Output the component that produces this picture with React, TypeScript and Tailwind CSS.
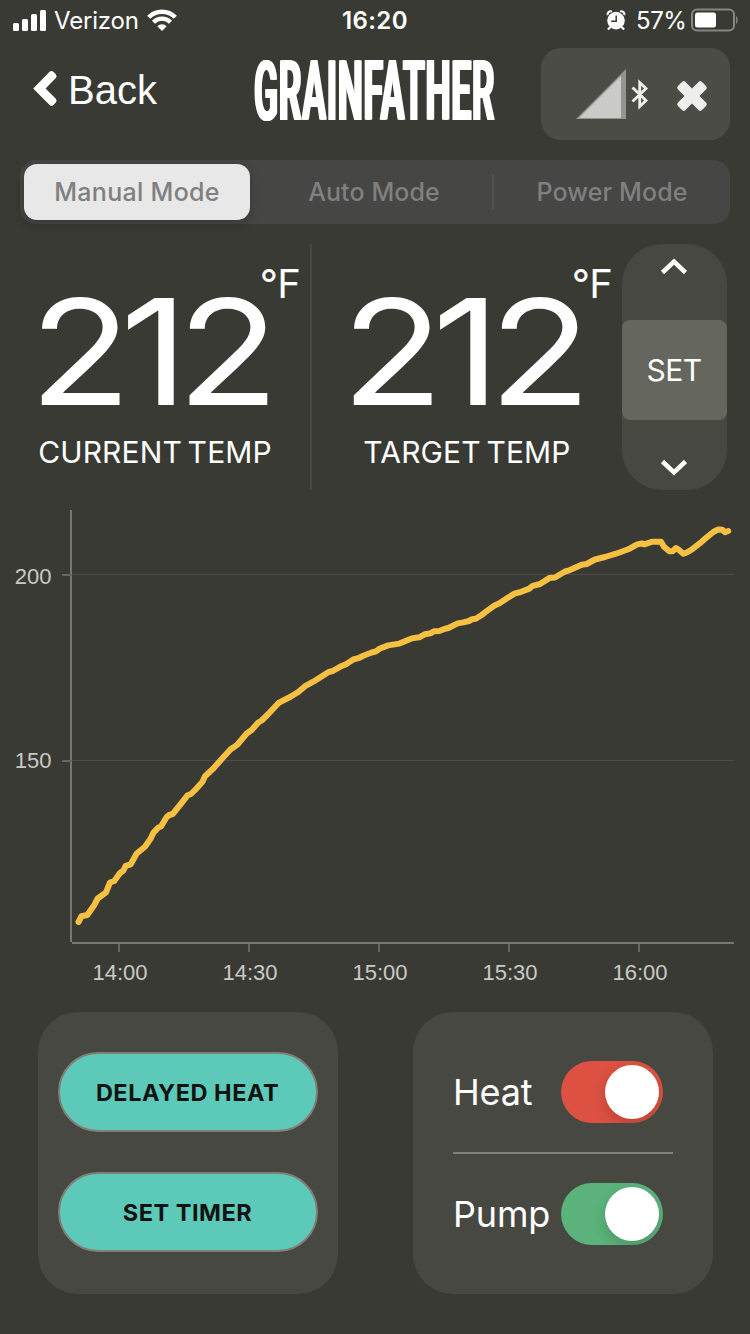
import React from "react";

const readings: number[][] = [
  [78.5, 922], [81.5, 916.2], [87.3, 915], [94.3, 905], [97.7, 898.5], [106, 892.3], [110, 882.5], [114.3, 881],
  [120, 873], [123.3, 870.7], [125.7, 865.9], [130.7, 864.3], [136.7, 853.5], [145, 846.7], [150.7, 838.5],
  [153.3, 832.9], [158.3, 827.5], [161, 826.5], [166.7, 817], [169.3, 815], [172.7, 814], [180, 805], [187.7, 795.2],
  [191, 794], [196.7, 788.3], [202.3, 782], [205, 776.2], [213.3, 768.5], [223.3, 757.3], [230.7, 749.2], [233.3, 747.7],
  [237.3, 744.7], [246.7, 733.5], [251.7, 730], [258.3, 722.5], [261.7, 720.5], [268.3, 714], [278.3, 703.2],
  [282, 701.2], [290, 697], [298.3, 692], [305, 686.2], [313.3, 681.7], [328.3, 672.2], [332.7, 671], [340, 666.8],
  [346, 664.2], [353.3, 659.5], [358.3, 658.2], [363.3, 655.7], [371.7, 652.5], [375.7, 651.5], [380, 648.5],
  [388.3, 645.4], [399.3, 643.6], [411.7, 638.4], [419.3, 637.3], [425, 634.2], [430.7, 633.3], [434, 631.2],
  [439.3, 631], [445, 628.7], [448.3, 628], [457.7, 623.4], [463.3, 622.4], [469, 621], [472.3, 619.2], [475.7, 618.7],
  [481.7, 615], [486, 611.7], [494, 605.8], [499, 603.6], [506.7, 598.4], [515, 593.4], [520, 592.3], [529.3, 588.6],
  [532.7, 585.8], [540, 584], [549.3, 578.1], [555, 577.5], [565, 571.5], [569.3, 570.3], [581.7, 564.7], [586.7, 564],
  [595, 559.5], [605, 557], [616, 553.7], [628.3, 549.3], [636.7, 544.7], [641.7, 543.4], [644.3, 544.3], [651.7, 541.8],
  [661, 541.8], [664, 546.7], [669.3, 551.2], [672.7, 551.2], [676, 548], [679.3, 550.3], [683.3, 553.8], [687.3, 552.3],
  [692.3, 549.2], [700, 543.2], [706.7, 537.3], [713.3, 532], [718.3, 529.4], [722.3, 529.8], [725, 532.2], [728.3, 531],
];

function StatusBar() {
  return (
    <div className="flex h-[40px] items-center pl-[13px] pr-[11px] text-white">
      <div className="flex w-[329px] items-center">
        <div className="mr-[8px] flex items-end gap-[3px]">
          <i className="h-[8px] w-[6px] rounded-[1.5px] bg-white" />
          <i className="h-[12px] w-[6px] rounded-[1.5px] bg-white" />
          <i className="h-[17px] w-[6px] rounded-[1.5px] bg-white" />
          <i className="h-[21px] w-[6px] rounded-[1.5px] bg-white" />
        </div>
        <span className="mt-[2px] w-[93px] text-[24px] leading-[30px] tracking-[-0.2px]">Verizon</span>
        <svg width="30" height="22" viewBox="0 0 30 22" fill="none" stroke="white" strokeWidth="4.400">
          <path d="M1.7 8.2 A19 19 0 0 1 28.3 8.2" />
          <path d="M6.5 13.2 A12 12 0 0 1 23.5 13.2" />
          <path d="M15 22 L10.3 17.2 A6.8 6.8 0 0 1 19.7 17.2 Z" fill="white" stroke="none" />
        </svg>
      </div>
      <span className="mt-[2px] flex-1 text-[24px] font-semibold leading-[30px] tracking-[0.4px]">16:20</span>
      <svg className="mr-[10px]" width="20" height="20" viewBox="0 0 20 20">
        <circle cx="10" cy="10.6" r="8.800" fill="white" />
        <path d="M1.6 4.2A3 3 0 0 1 5 1.300M15 1.300A3 3 0 0 1 18.4 4.200M4 17.500L2.500 18.800M16 17.500L17.500 18.800" stroke="white" strokeWidth="2.2" strokeLinecap="round" />
        <path d="M10.2 5.6V11.2H5.2" fill="none" stroke="#3a3a34" strokeWidth="1.500" />
      </svg>
      <span className="mt-[2px] w-[54px] whitespace-nowrap text-[24px] leading-[30px] tracking-[-0.4px]">57%</span>
      <svg width="49" height="24" viewBox="0 0 49 24">
        <rect x="2" y="1.5" width="42" height="21" rx="5" fill="none" stroke="#868682" strokeWidth="2" />
        <rect x="5" y="4.5" width="21" height="15" rx="2.5" fill="white" />
        <path d="M46 8C48.2 9.3 48.2 14.7 46 16Z" fill="#868682" />
      </svg>
    </div>
  );
}

function Header() {
  return (
    <header className="flex h-[120px] items-start pl-[31px] pr-[20px] text-white">
      <div className="flex w-[222px] items-center pt-[27px]">
        <svg className="-mt-[4px]" width="27" height="40" viewBox="0 0 27 40">
          <path d="M2.200 20.400L18.600 3.800Q20.500 2 22.400 3.800L24.800 6.300Q26.500 8.300 24.800 10.100L14.600 20.400L24.800 30.700Q26.500 32.600 24.800 34.500L22.400 37Q20.500 38.800 18.600 37Z" fill="white" />
        </svg>
        <span className="ml-[10px] font-['Liberation_Sans',sans-serif] text-[40px] leading-[46px]">Back</span>
      </div>
      <div className="mt-[12px] h-[80px] w-[288px]">
        <span className="inline-block origin-left scale-x-[0.42] whitespace-nowrap font-['Roboto',sans-serif] text-[84px] font-bold leading-[80px] tracking-[1.9px] [text-shadow:1.5px_0_0_white,3px_0_0_white,5px_0_0_white]">
          GRAINFATHER
        </span>
      </div>
      <div className="mt-[8px] flex h-[92px] w-[189px] items-center rounded-[20px] bg-[#4c4c47]">
        <svg width="189" height="92" viewBox="0 0 189 92">
          <path d="M35 71L85 21V71Z" fill="#94958f" />
          <path d="M38 70L80 28V70Z" fill="#cacac8" />
          <path d="M91.500 39.500L105 52.500L98.700 58.500V34.500L105 40.500L91.500 53.500" fill="none" stroke="#eee" strokeWidth="2.800" />
          <g fill="#eeeeed" transform="translate(151 48)">
            <rect x="-17" y="-5.300" width="34" height="10.600" rx="2.500" transform="rotate(45)" />
            <rect x="-17" y="-5.300" width="34" height="10.600" rx="2.500" transform="rotate(-45)" />
          </g>
        </svg>
      </div>
    </header>
  );
}

function ModeTabs() {
  return (
    <div className="mx-[20px] flex h-[64px] items-center rounded-[16px] bg-[#464644] p-[4px] text-[25px] font-medium text-[#808080]">
      <div className="flex h-[56px] w-[226px] items-center justify-center rounded-[13px] bg-[#e8e8e8] pt-[2px] tracking-[0.3px] shadow-[0_4px_12px_rgba(0,0,0,0.2)]">Manual Mode</div>
      <div className="flex h-[36px] w-[244px] items-center justify-center border-r-2 border-[#52524f] pl-[6px] pt-[2px] tracking-[0.1px]">Auto Mode</div>
      <div className="flex flex-1 items-center justify-center pl-[4px] pt-[2px] tracking-[0.1px]">Power Mode</div>
    </div>
  );
}

function Temp({ label, wide }: { label: string; wide: boolean }) {
  return (
    <div className={wide ? "relative h-[246px] w-[312px] border-r-2 border-[#484843]" : "relative h-[246px] w-[310px]"}>
      <div className="flex h-[180px] items-end justify-center pr-[12px]">
        <span className="inline-block scale-x-[1.14] text-[147px] leading-[145px] tracking-[-10px]">212</span>
      </div>
      <span className="absolute right-[10px] top-[16px] text-[40px] leading-[48px] tracking-[-0.8px]">°F</span>
      <div className="mt-[10px] flex h-[36px] items-center justify-center whitespace-nowrap text-[30px] tracking-[0.15px] [word-spacing:-3px]">
        {label}
      </div>
    </div>
  );
}

function TempRow() {
  return (
    <section className="mt-[20px] flex h-[246px] text-white">
      <Temp label="CURRENT TEMP" wide />
      <Temp label="TARGET TEMP" wide={false} />
      <div className="flex w-[105px] flex-col items-center rounded-[40px] bg-[#484842]">
        <div className="flex h-[76px] items-start pr-[1px] pt-[14px]">
          <svg width="28" height="18" viewBox="0 0 28 18" fill="none" stroke="white" strokeWidth="4.500"><path d="M2.500 14.500L14 3.500L25.500 14.500" /></svg>
        </div>
        <div className="flex h-[100px] w-[105px] items-center justify-center rounded-[8px] bg-[#65665e] pr-[1px] text-[30px] tracking-[-0.5px]">SET</div>
        <div className="flex h-[70px] items-end pb-[14px] pr-[1px]">
          <svg width="28" height="18" viewBox="0 0 28 18" fill="none" stroke="white" strokeWidth="4.500"><path d="M2.500 3.500L14 14.500L25.500 3.500" /></svg>
        </div>
      </div>
    </section>
  );
}

function Chart() {
  const times = ["14:00", "14:30", "15:00", "15:30", "16:00"];
  return (
    <svg className="mt-[10px] block" width="750" height="500" viewBox="0 500 750 500">
      <path d="M72 574.5H734M72 760.500H734" stroke="#4d4e48" strokeWidth="1" />
      <path d="M71 510V942" stroke="#777873" strokeWidth="2" />
      <path d="M72 943H734" stroke="#777873" strokeWidth="2" />
      <path d="M62 575H72M62 761H72" stroke="#666761" strokeWidth="2" />
      <g fontFamily="Liberation Sans, Arial, sans-serif" fontSize="22" fill="#c9c9c6">
        <text x="51.500" y="584" textAnchor="end">200</text>
        <text x="51.500" y="768" textAnchor="end">150</text>
        {times.map((t, i) => (
          <g key={t}>
            <path d={`M${119 + i * 130} 944V952`} stroke="#666761" strokeWidth="2" />
            <text x={120 + i * 130} y="980" textAnchor="middle">{t}</text>
          </g>
        ))}
      </g>
      <polyline points={readings.map((p) => p.join(",")).join(" ")} fill="none" stroke="#f6c042" strokeWidth="6" strokeLinecap="round" strokeLinejoin="round" />
    </svg>
  );
}

function ActionButton({ children }: { children: React.ReactNode }) {
  return (
    <button className="flex h-[80px] w-[260px] items-center justify-center rounded-[40px] border-2 border-[#808078] bg-[#5dc9b8] pr-[1px] pt-[2px] text-[23.5px] font-bold tracking-[0.5px] text-[#111313]">
      {children}
    </button>
  );
}

function Toggle({ green }: { green?: boolean }) {
  return (
    <div className={green ? "flex h-[62px] w-[102px] justify-end overflow-hidden rounded-[31px] bg-[#5bb27b] p-[4px]" : "flex h-[62px] w-[102px] justify-end overflow-hidden rounded-[31px] bg-[#dc5141] p-[4px]"}>
      <div className="h-[54px] w-[54px] rounded-full bg-white shadow-[0_6px_14px_rgba(0,0,0,0.15)]" />
    </div>
  );
}

function Controls() {
  return (
    <section className="mt-[12px] flex justify-between pl-[38px] pr-[37px]">
      <div className="flex h-[282px] w-[300px] flex-col items-center gap-[40px] rounded-[40px] bg-[#484842] pt-[40px]">
        <ActionButton>DELAYED HEAT</ActionButton>
        <ActionButton>SET TIMER</ActionButton>
      </div>
      <div className="flex h-[282px] w-[300px] flex-col rounded-[40px] bg-[#484842] px-[40px] pt-[49px] text-[36px] tracking-[-0.2px] text-white">
        <div className="flex h-[62px] items-center justify-between pr-[10px]">
          <span>Heat</span>
          <Toggle />
        </div>
        <div className="my-[29px] h-[2px] bg-[#808178]" />
        <div className="flex h-[62px] items-center justify-between pr-[10px]">
          <span>Pump</span>
          <Toggle green />
        </div>
      </div>
    </section>
  );
}

export default function App() {
  return (
    <main className="h-[1334px] w-[750px] overflow-hidden bg-[#3a3a34] font-['Inter',sans-serif]">
      <StatusBar />
      <Header />
      <ModeTabs />
      <TempRow />
      <Chart />
      <Controls />
    </main>
  );
}
